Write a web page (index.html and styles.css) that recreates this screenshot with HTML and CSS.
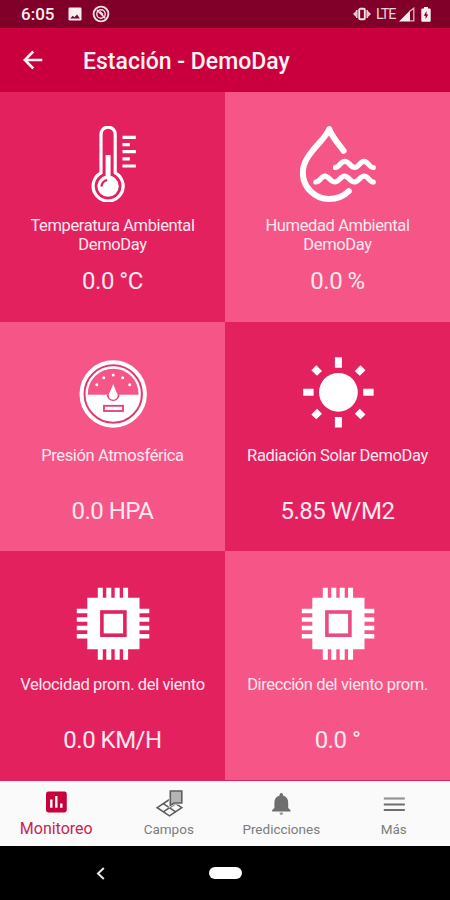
FILE: index.html
```html
<!DOCTYPE html>
<html lang="es">
<head>
  <meta charset="UTF-8">
  <meta name="viewport" content="width=device-width, initial-scale=1">
  <title>Estación - DemoDay</title>
  <link rel="stylesheet" href="styles.css">
</head>
<body>
  <!-- chip icon, used by both wind sensors -->
  <svg class="defs" width="0" height="0">
    <symbol id="chip" viewBox="0 0 76 76">
      <path fill="#fff" d="M12.3 12.7h52.2v51.6H12.3z"/>
      <path stroke="#fff" stroke-width="5" d="M25.3 2.7v72M33.8 2.7v72M42.2 2.7v72M50.6 2.7v72"/>
      <path stroke="#fff" stroke-width="4.5" d="M1.8 26h72.5M1.8 34.5h72.5M1.8 43h72.5M1.8 51.2h72.5"/>
      <rect x="26.9" y="27" width="23" height="23.2" fill="#fff" stroke="currentColor" stroke-width="3.6"/>
    </symbol>
  </svg>

  <div class="status-bar">
    <span class="time">6:05</span>
    <svg class="picture" width="14" height="14" viewBox="0 0 14 14">
      <rect x="0.5" y="0.5" width="13" height="13" rx="1.3" fill="#fbeef1"/>
      <path fill="#80002a" d="M2.2 11.5l2.5-2.7 1.8 1.4L9 7.6l2.9 3.9z"/>
    </svg>
    <svg class="sync" width="18" height="18" viewBox="0 0 18 18" fill="none" stroke="#f3dfe4">
      <circle cx="9" cy="9" r="7.4" stroke-width="1.9"/>
      <circle cx="9" cy="9" r="4.2" stroke-width="1.4"/>
      <path stroke-width="1.6" d="M5 5l8.3 8.3M7.8 6.5l3.2 3"/>
    </svg>
    <svg class="vibrate" width="18" height="14" viewBox="0 0 18 14">
      <path fill="#e8c9d1" d="M0 7l3.6-3.6v7.2zM18 7l-3.6-3.6v7.2z"/>
      <path stroke="#e8c9d1" stroke-width="1.6" d="M3.8 3v8M14.2 3v8"/>
      <rect x="6.2" y="1.8" width="5.6" height="10.4" rx="1" fill="none" stroke="#f6e6ea" stroke-width="1.9"/>
    </svg>
    <span class="lte">LTE</span>
    <svg class="signal" width="16" height="15" viewBox="0 0 16 15">
      <path fill="#fbeef1" d="M0 14.5L11 3.5v11z"/>
      <path fill="none" stroke="#dcb5bf" stroke-width="1.3" d="M10.5 4.5l4.3-3.3v12.6h-4"/>
    </svg>
    <svg class="battery" width="10" height="15" viewBox="0 0 10 15">
      <path fill="#fbeef1" d="M3 0h4v1.6h1.7q1 0 1 1v11.2q0 1-1 1H1.3q-1 0-1-1V2.6q0-1 1-1H3z"/>
      <path fill="#80002a" d="M5.5 4L2.8 8.8h1.8v3.4L7.2 7.6H5.5z"/>
    </svg>
  </div>

  <header class="app-bar">
    <svg width="20" height="20" viewBox="0 0 20 20" fill="none" stroke="#fff4f4" stroke-width="2.5">
      <path d="M19.3 10H2.5M10.3 1.5L1.8 10l8.5 8.5"/>
    </svg>
    <h1>Estación - DemoDay</h1>
  </header>

  <main class="grid">
    <section class="tile dark">
      <svg class="icon" viewBox="0 0 76 76" fill="none" stroke="#fff">
        <path stroke-width="3.2" d="M26 46.8V8.2a7.1 7.1 0 0 1 14.2 0v38.6a15 15 0 1 1-14.2 0z"/>
        <circle cx="33.1" cy="60.2" r="10.6" fill="#fff" stroke="none"/>
        <path stroke-width="5" d="M33.1 29v24"/>
        <path stroke="currentColor" stroke-width="2.4" d="M26.6 60.5a6.6 6.6 0 0 1 5.6-6.4"/>
        <path stroke-width="3.2" d="M47.5 11.4h13.4M47.5 18.6h7.3M47.5 25.7h13.4M47.5 32.8h7.3M47.5 40h13.4"/>
      </svg>
      <p class="label">Temperatura Ambiental<br>DemoDay</p>
      <p class="value">0.0 °C</p>
    </section>

    <section class="tile light">
      <svg class="icon" viewBox="0 0 76 76" fill="none" stroke="#fff" stroke-width="6" stroke-linecap="round" stroke-linejoin="round">
        <path d="M43.6 24.8C38 17.5 31.5 10 29.2 3C26 14 2.8 28 2.8 46.5C2.8 61 14.5 73 29 73C37 73 43.5 70.5 48.8 65.2"/>
        <path stroke-width="5.2" d="M35.5 41.4C39.5 41.4 40.5 35.3 44.8 35.3S50.5 41.4 54.7 41.4S59.8 35.3 64 35.3S69 41.5 73.3 41.5"/>
        <path stroke-width="5.2" d="M15.8 56C20 56 21 50.2 25 50.2S30.5 56 34.8 56S40.5 50.2 44.6 50.2S50 56 54.3 56S60 50.2 64.2 50.2S69.5 56 73.3 56"/>
      </svg>
      <p class="label">Humedad Ambiental<br>DemoDay</p>
      <p class="value">0.0 %</p>
    </section>

    <section class="tile light">
      <svg class="icon" viewBox="0 0 76 76">
        <circle cx="38.2" cy="38" r="31.7" fill="none" stroke="#fff" stroke-width="4"/>
        <circle cx="38.2" cy="38" r="28.7" fill="none" stroke="#d93672" stroke-width="1.3"/>
        <circle cx="38.2" cy="38" r="26.5" fill="none" stroke="#fff" stroke-width="2.3"/>
        <path fill="#fff" d="M11.7 38.7h53a26.5 26.5 0 0 1-53 0z"/>
        <path fill="#e0407a" d="M31.8 38.5a6.4 6.4 0 0 0 12.8 0z"/>
        <path fill="#fff" d="M38.2 28l3.3 8.3a4.5 4.5 0 1 1-6.6 0z"/>
        <rect x="29" y="49.8" width="19" height="5.2" fill="#fff" stroke="#e0407a" stroke-width="1.8"/>
        <g fill="#fff">
          <circle cx="21.8" cy="28.7" r="1.5"/>
          <circle cx="28.8" cy="21.7" r="1.5"/>
          <circle cx="38.2" cy="19" r="1.5"/>
          <circle cx="47.7" cy="21.7" r="1.5"/>
          <circle cx="54.7" cy="28.7" r="1.5"/>
        </g>
      </svg>
      <p class="label">Presión Atmosférica</p>
      <p class="value">0.0 HPA</p>
    </section>

    <section class="tile dark">
      <svg class="icon" viewBox="0 0 76 76" stroke="#fff" stroke-width="7">
        <circle cx="38.4" cy="36.3" r="19.4" fill="#fff" stroke="none"/>
        <path d="M38.4 1.3v10.4M38.4 61v10.4M3.2 36.3h10.4M63.2 36.3h10.4"/>
        <path d="M13.8 11.7l5.7 5.7M63 11.7l-5.7 5.7M13.8 60.9l5.7-5.7M63 60.9l-5.7-5.7"/>
      </svg>
      <p class="label">Radiación Solar DemoDay</p>
      <p class="value">5.85 W/M2</p>
    </section>

    <section class="tile dark">
      <svg class="icon"><use href="#chip"/></svg>
      <p class="label">Velocidad prom. del viento</p>
      <p class="value">0.0 KM/H</p>
    </section>

    <section class="tile light">
      <svg class="icon"><use href="#chip"/></svg>
      <p class="label">Dirección del viento prom.</p>
      <p class="value">0.0 °</p>
    </section>
  </main>

  <nav class="bottom-nav">
    <a class="item active">
      <svg width="28" height="28" viewBox="0 0 28 28">
        <rect x="4" y="2.6" width="20.8" height="20.8" rx="2.3" fill="#c8003c"/>
        <path stroke="#fff" stroke-width="2.4" d="M9.3 10.5v8.3M14.3 7v11.8M19.3 14.5v4.3"/>
      </svg>
      <span>Monitoreo</span>
    </a>
    <a class="item">
      <svg width="28" height="28" viewBox="0 0 28 28" fill="none" stroke="#5e5e5e" stroke-width="1.6">
        <path d="M14.5 10.5L2.2 18.7l12.3 8.2 12.3-8.2z"/>
        <path d="M8.3 14.6l12.4 8.2M20.7 14.6L8.3 22.8"/>
        <path fill="#b5b5b5" stroke="#fafafa" stroke-width="3" d="M15.3 2h11.5v12h-7.5l-4 2.3z"/>
        <path fill="#b5b5b5" d="M15.3 2h11.5v12h-7.5l-4 2.3z"/>
      </svg>
      <span>Campos</span>
    </a>
    <a class="item">
      <svg width="28" height="28" viewBox="0 0 28 28" fill="#6e6e6e">
        <path d="M14.3 4a1.7 1.7 0 0 1 1.7 1.7v.8c3.3.8 5.2 3.6 5.2 7v5.5l2.3 2.3v1.2H5.1v-1.2L7.4 19v-5.5c0-3.4 1.9-6.2 5.2-7v-.8A1.7 1.7 0 0 1 14.3 4z"/>
        <path fill="#999" d="M12.5 23.5h3.6a1.8 2.6 0 0 1-3.6 0z"/>
      </svg>
      <span>Predicciones</span>
    </a>
    <a class="item">
      <svg width="28" height="28" viewBox="0 0 28 28" stroke="#6e6e6e" stroke-width="2.2">
        <path stroke="#959595" d="M3.8 9.5h21"/>
        <path d="M3.8 15.5h21M3.8 21h21"/>
      </svg>
      <span>Más</span>
    </a>
  </nav>

  <div class="system-nav">
    <svg width="9" height="13" viewBox="0 0 9 13" fill="none" stroke="#e8e8e8" stroke-width="2">
      <path d="M7.8 1L2 6.5 7.8 12"/>
    </svg>
    <div class="home"></div>
  </div>
</body>
</html>
```
FILE: styles.css
```css
* {
  box-sizing: border-box;
  margin: 0;
  padding: 0;
}

body {
  width: 450px;
  height: 900px;
  display: flex;
  flex-direction: column;
  font-family: Roboto, "Liberation Sans", sans-serif;
  background-color: #000;
  overflow: hidden;
}

svg {
  display: block;
  flex-shrink: 0;
}

.defs {
  position: absolute;
}

.status-bar {
  height: 28px;
  display: flex;
  align-items: center;
  padding: 0 19px 0 21px;
  background-color: #80002a;
  color: #fbeef1;
}

.time {
  width: 47px;
  font-size: 17px;
  font-weight: 500;
}

.sync {
  margin-left: 10px;
}

.vibrate {
  margin-left: auto;
}

.lte {
  width: 23px;
  margin-left: 5px;
  font-size: 14.5px;
  letter-spacing: -1.1px;
  color: #ecd3d9;
}

.battery {
  margin-left: 6px;
}

.app-bar {
  height: 64px;
  display: flex;
  align-items: center;
  padding: 0 23px;
  background-color: #c9003d;
}

.app-bar h1 {
  margin: 3px 0 0 40px;
  font-size: 23px;
  font-weight: 500;
  color: #fff2f2;
}

.grid {
  height: 689px;
  display: grid;
  grid-template-columns: 1fr 1fr;
  grid-template-rows: 230px 229px 229px;
  background-color: #e3215f;
}

.tile {
  display: flex;
  flex-direction: column;
  align-items: center;
  padding-top: 34px;
  text-align: center;
  color: #ffe9ef;
}

.dark {
  background-color: #e3215f;
}

.light {
  background-color: #f55687;
}

.icon {
  width: 76px;
  height: 76px;
}

.dark .icon {
  color: #e3215f;
}

.light .icon {
  color: #ea4c7f;
}

.label {
  height: 38px;
  margin-top: 15px;
  font-size: 16.5px;
  line-height: 18.5px;
  letter-spacing: -0.38px;
}

.value {
  margin-top: 12px;
  font-size: 24px;
  line-height: 28px;
  letter-spacing: -0.5px;
}

.bottom-nav {
  height: 65px;
  display: grid;
  grid-template-columns: repeat(4, 1fr);
  background-color: #fafafa;
}

.item {
  display: flex;
  flex-direction: column;
  align-items: center;
  padding-top: 8px;
  font-size: 13.5px;
  color: #7d7d7d;
}

.item span {
  height: 20px;
  margin-top: 2px;
  line-height: 20px;
}

.active {
  font-size: 16px;
  color: #c8244f;
}

.system-nav {
  flex: 1;
  display: flex;
  align-items: center;
  padding-left: 96px;
}

.home {
  width: 33px;
  height: 12px;
  margin-left: 104px;
  border-radius: 6px;
  background-color: #fff;
}
```
